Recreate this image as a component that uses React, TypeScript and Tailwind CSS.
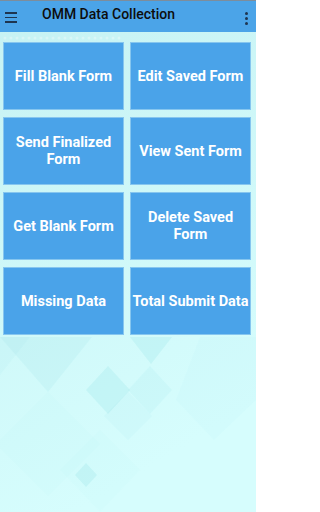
import React from "react";

const items = [
  "Fill Blank Form",
  "Edit Saved Form",
  "Send Finalized Form",
  "View Sent Form",
  "Get Blank Form",
  "Delete Saved Form",
  "Missing Data",
  "Total Submit Data",
];

function Bg() {
  return (
    <svg className="absolute inset-0" width="256" height="512" viewBox="0 0 256 512">
      <defs>
        <linearGradient id="g" x1="0" y1="0" x2="0.3" y2="1">
          <stop offset="0" stopColor="#c6f2f3" />
          <stop offset="1" stopColor="#d6fdfd" />
        </linearGradient>
      </defs>
      <rect width="256" height="512" fill="url(#g)" />
      <g fill="#8edde3">
        <polygon points="0,337 92,337 48,392" opacity="0.14" />
        <polygon points="0,337 30,337 0,375" opacity="0.08" />
        <polygon points="108,366 130,390 108,414 86,390" opacity="0.22" />
        <polygon points="150,366 172,390 150,414 128,390" opacity="0.12" />
        <polygon points="130,337 172,337 151,364" opacity="0.22" />
        <polygon points="128,392 152,416 128,440 104,416" opacity="0.08" />
        <polygon points="86,463 97,475 86,487 75,475" opacity="0.22" />
        <polygon points="200,337 256,337 256,400 214,440 176,400" opacity="0.05" />
        <polygon points="48,392 100,444 48,496 0,448 0,440" opacity="0.04" />
        <polygon points="100,430 140,470 100,512 60,470" opacity="0.03" />
      </g>
      <g fill="#ffffff" opacity="0.3">
        {Array.from({ length: 20 }).map((_, i) => (
          <circle key={i} cx={5 + i * 6} cy={38} r={1.5} />
        ))}
      </g>
    </svg>
  );
}

export default function App() {
  return (
    <div
      className="relative w-[256px] h-[512px] overflow-hidden"
      style={{ fontFamily: "Roboto, 'Liberation Sans', sans-serif" }}
    >
      <Bg />
      <div className="relative flex flex-col">
        <div className="h-[32px] bg-[#4ba4e8] border-t border-[#7d8d9c] flex items-start">
          <div className="w-[22px] ml-[5px] mt-[11px] flex flex-col gap-[3px]">
            <div className="w-[12px] h-[1.5px] bg-[#1e3550]" />
            <div className="w-[12px] h-[1.5px] bg-[#1e3550]" />
            <div className="w-[12px] h-[1.5px] bg-[#1e3550]" />
          </div>
          <div className="ml-[15px] mt-[3px] text-[14px] font-medium text-[#0d0d0d] leading-[20px]">
            OMM Data Collection
          </div>
          <div className="ml-auto mr-[8px] mt-[11px] flex flex-col gap-[2px]">
            <div className="w-[3px] h-[3px] rounded-full bg-[#1e3550]" />
            <div className="w-[3px] h-[3px] rounded-full bg-[#1e3550]" />
            <div className="w-[3px] h-[3px] rounded-full bg-[#1e3550]" />
          </div>
        </div>
        <div className="grid grid-cols-2 gap-x-[6px] gap-y-[7px] pt-[10px] pl-[3px] pr-[5px]">
          {items.map((t) => (
            <div
              key={t}
              className={
                "h-[68px] bg-[#4aa3e9] border border-[#86c6ef] flex items-center justify-center text-center text-white font-bold text-[14.5px] leading-[17px] px-[2px]" +
                (t === "Total Submit Data" ? " whitespace-nowrap px-0" : "")
              }
            >
              {t}
            </div>
          ))}
        </div>
      </div>
    </div>
  );
}
